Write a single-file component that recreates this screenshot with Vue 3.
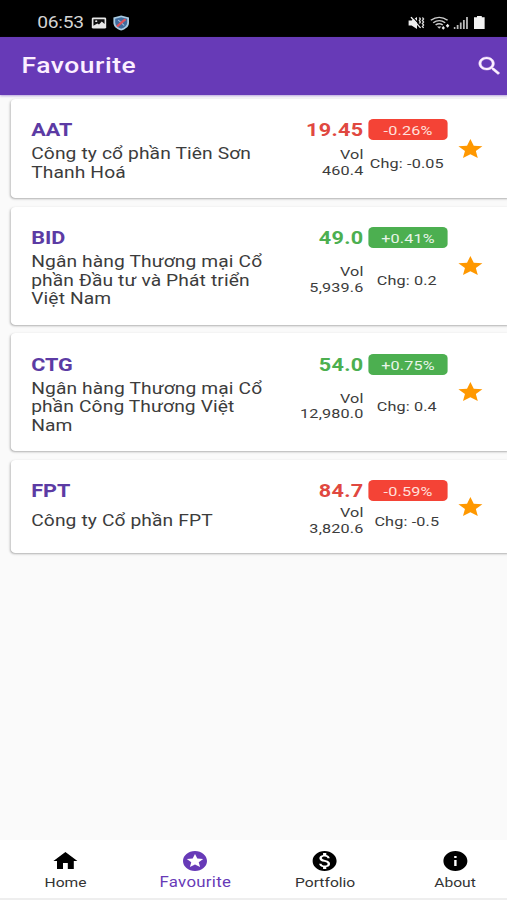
<script setup>
import { ref } from 'vue';

const stocks = ref([
    { code: 'AAT', name: 'Công ty cổ phần Tiên Sơn Thanh Hoá', price: '19.45', percent: '-0.26%', vol: '460.4', chg: '-0.05' },
    { code: 'BID', name: 'Ngân hàng Thương mại Cổ phần Đầu tư và Phát triển Việt Nam', price: '49.0', percent: '+0.41%', vol: '5,939.6', chg: '0.2' },
    { code: 'CTG', name: 'Ngân hàng Thương mại Cổ phần Công Thương Việt Nam', price: '54.0', percent: '+0.75%', vol: '12,980.0', chg: '0.4' },
    { code: 'FPT', name: 'Công ty Cổ phần FPT', price: '84.7', percent: '-0.59%', vol: '3,820.6', chg: '-0.5' },
]);

const tabs = [
    { label: 'Home', icon: 'M10 20v-6h4v6h5v-8h3L12 3 2 12h3v8z' },
    { label: 'Favourite', icon: 'M11.99 2C6.47 2 2 6.48 2 12s4.47 10 9.99 10C17.52 22 22 17.52 22 12S17.52 2 11.99 2zm4.24 16L12 15.45 7.77 18l1.12-4.81-3.73-3.23 4.92-.42L12 5l1.92 4.53 4.92.42-3.73 3.23L16.23 18z' },
    { label: 'Portfolio', icon: 'M12 2C6.48 2 2 6.48 2 12s4.48 10 10 10 10-4.48 10-10S17.52 2 12 2zm1.41 16.09V20h-2.67v-1.93c-1.71-.36-3.16-1.46-3.27-3.4h1.96c.1 1.05.82 1.87 2.65 1.87 1.96 0 2.4-.98 2.4-1.59 0-.83-.44-1.61-2.67-2.14-2.48-.6-4.18-1.62-4.18-3.67 0-1.72 1.39-2.84 3.11-3.21V4h2.67v1.95c1.86.45 2.79 1.86 2.85 3.39H14.3c-.05-1.11-.64-1.87-2.22-1.87-1.5 0-2.4.68-2.4 1.64 0 .84.65 1.39 2.67 1.91s4.18 1.39 4.18 3.91c-.01 1.83-1.38 2.83-3.12 3.16z' },
    { label: 'About', icon: 'M12 2C6.48 2 2 6.48 2 12s4.48 10 10 10 10-4.48 10-10S17.52 2 12 2zm1 15h-2v-6h2v6zm0-8h-2V7h2v2z' },
];

const current = ref('Favourite');
</script>

<template>
    <div class="screen">
        <div class="status">
            <span class="time">06:53</span>
            <svg class="picture" viewBox="0 0 14 14">
                <rect x="0.5" y="1" width="13" height="12" rx="1.5" fill="#e8e8e8" />
                <path d="M2 3h10v5l-2.5-2.5L7 8.5 5.5 7.5 2 10z" fill="#111" />
                <circle cx="4.5" cy="5" r="1" fill="#e8e8e8" />
            </svg>
            <svg class="shield" viewBox="0 0 14 16">
                <path d="M7 .5 13.5 2.5V7.5C13.5 11.5 11 14 7 15.5 3 14 .5 11.5.5 7.5V2.5z" fill="#a9cbe2" />
                <path d="M7 2.2 12 3.7V7.5C12 10.5 10 12.5 7 13.800 4 12.5 2 10.5 2 7.5V3.700z" fill="#3f6c9e" />
                <path d="M4.500 5l5 5.500" stroke="#a9bfe0" stroke-width="1" />
                <path d="M3.500 11.500 10.500 4.300" stroke="#e0525a" stroke-width="2" />
            </svg>
            <div class="signals">
                <svg class="mute" viewBox="0 0 14 14">
                    <path d="M.5 4.500H3L7.500 1v12L3 9.500H.5z" fill="#eee" />
                    <path d="M3.500.5l8 10.500" stroke="#000" stroke-width="1.200" />
                    <path d="M2.500 1.200l8 10.800" stroke="#eee" stroke-width="1.200" />
                    <path d="M9.500 1.500l.8 1.500-.8 1.500.8 1.500-.8 1.500M12 1.500l1 1.500-1 1.500 1 1.500-1 1.500 1 1.500-1 1.500 1 1.500" fill="none" stroke="#ddd" stroke-width="1.200" />
                </svg>
                <svg class="wifi" viewBox="0 0 17 14">
                    <g fill="none" stroke="#ccc" stroke-width="1.300">
                        <path d="M1 4.200Q8 -1.500 15 4.200" />
                        <path d="M3 6.700Q8 2.500 13 6.700" />
                        <path d="M5 9Q8 6.500 11 9" />
                    </g>
                    <path d="M6.200 10.500h3.600L8 12.800z" fill="#ccc" />
                    <path d="M10 12l1.400-2 1.400 2-1.400 1.700zM13.500 9.800l1.500-2 1.500 2-1.500 1.900z" fill="#eee" />
                </svg>
                <svg class="bars" viewBox="0 0 12 12">
                    <path d="M0 10h1.500v2H0zM2.600 8h1.500v4H2.600zM5.200 5.500h1.500V12H5.200zM7.800 3h1.500v9H7.800zM10.400 0h1.500v12h-1.500z" fill="#bbb" />
                </svg>
                <svg class="battery" viewBox="0 0 9 13">
                    <path d="M2.500 0h4v1.300H9V13H0V1.300h2.500z" fill="#f2f2f2" />
                </svg>
            </div>
        </div>

        <header class="appbar">
            <h1>Favourite</h1>
            <svg class="search" viewBox="0 0 24 24">
                <path fill="currentColor" stroke="currentColor" stroke-width="0.4" d="M15.5 14h-.79l-.28-.27C15.41 12.59 16 11.11 16 9.5 16 5.91 13.09 3 9.5 3S3 5.910 3 9.5 5.910 16 9.5 16c1.610 0 3.090-.59 4.230-1.570l.27.28v.79l5 4.990L20.490 19l-4.990-5zm-6 0C7.010 14 5 11.990 5 9.500S7.010 5 9.500 5 14 7.010 14 9.500 11.990 14 9.500 14z" />
            </svg>
        </header>

        <main class="list">
            <div class="card" v-for="stock in stocks" :key="stock.code">
                <div class="info">
                    <div class="code">{{ stock.code }}</div>
                    <div class="price" :class="{ down: stock.percent[0] === '-' }">{{ stock.price }}</div>
                    <div class="badge" :class="{ down: stock.percent[0] === '-' }">{{ stock.percent }}</div>
                    <div class="name">{{ stock.name }}</div>
                    <div class="vol">
                        <div>Vol</div>
                        <div>{{ stock.vol }}</div>
                    </div>
                    <div class="chg">Chg: {{ stock.chg }}</div>
                </div>
                <svg class="star" viewBox="0 0 24 24">
                    <path fill="currentColor" d="M12 17.270 18.180 21l-1.640-7.030L22 9.240l-7.190-.61L12 2 9.190 8.630 2 9.240l5.460 4.730L5.820 21z" />
                </svg>
            </div>
        </main>

        <nav class="tabs">
            <div
                class="tab"
                v-for="tab in tabs"
                :key="tab.label"
                :class="{ active: tab.label === current }"
                @click="current = tab.label"
            >
                <svg viewBox="0 0 24 24"><path fill="currentColor" :d="tab.icon" /></svg>
                <span>{{ tab.label }}</span>
            </div>
        </nav>
    </div>
</template>

<style>
body {
    margin: 0;
    overflow: hidden;
    background: #fafafa;
}
</style>

<style scoped>
/* the layout is 422.5 units wide and stretched horizontally to fill 507px */
.screen {
    width: 422.5px;
    height: 900px;
    display: flex;
    flex-direction: column;
    overflow: hidden;
    box-sizing: border-box;
    border-bottom: 2px solid #eeeeee;
    background: #fafafa;
    color: #3c3c3c;
    font-family: Roboto, "Noto Sans", sans-serif;
    transform: scaleX(1.2);
    transform-origin: 0 0;
}
svg {
    display: block;
    flex: none;
}
.status {
    height: 37px;
    flex: none;
    display: flex;
    align-items: center;
    box-sizing: border-box;
    padding: 8px 19px 0 31px;
    background: #000;
}
.time {
    width: 45px;
    padding-top: 1px;
    font-size: 16px;
    line-height: 20px;
    letter-spacing: -0.2px;
    color: #d4d4d4;
}
.picture {
    width: 13px;
    height: 14px;
}
.shield {
    width: 14px;
    height: 16px;
    margin-left: 5px;
}
.signals {
    margin-left: auto;
    display: flex;
    align-items: center;
}
.mute {
    width: 14px;
    height: 14px;
}
.wifi {
    width: 17px;
    height: 14px;
    margin-left: 4px;
}
.bars {
    width: 12px;
    height: 12px;
    margin-left: 3px;
}
.battery {
    width: 9px;
    height: 13px;
    margin-left: 5px;
}
.appbar {
    position: relative;
    height: 58px;
    flex: none;
    display: flex;
    align-items: center;
    justify-content: space-between;
    box-sizing: border-box;
    padding: 0 3px 0 18px;
    background: #673ab7;
    color: #fcefff;
    box-shadow: 0 1px 2px rgba(103, 58, 183, 0.45);
}
h1 {
    margin: 0;
    font-size: 22px;
    font-weight: 500;
    line-height: 26px;
    letter-spacing: 0.45px;
}
.search {
    width: 24px;
    height: 24px;
}
.list {
    flex: 1;
    display: flex;
    flex-direction: column;
    gap: 8.5px;
    padding: 3.5px 0 0 9px;
}
.card {
    display: flex;
    align-items: center;
    padding: 20.5px 0 17px 17px;
    background: #fff;
    border-radius: 4px 0 0 4px;
    box-shadow: 0 1px 2px rgba(0, 0, 0, 0.3);
}
.info {
    display: grid;
    grid-template-columns: 205px 72px 66px;
    row-gap: 4px;
    align-items: center;
}
.code {
    font-size: 18px;
    font-weight: 700;
    line-height: 21px;
    color: #5c3ba4;
}
.price {
    font-size: 18px;
    font-weight: 700;
    line-height: 21px;
    letter-spacing: 0.3px;
    text-align: right;
    color: #4caf50;
}
.price.down {
    color: #e04840;
}
.badge {
    height: 21px;
    margin-left: 4px;
    width: 66px;
    border-radius: 4px;
    background: #4caf50;
    color: #e9f5e9;
    font-size: 13.5px;
    line-height: 22px;
    letter-spacing: 0.15px;
    text-align: center;
}
.badge.down {
    background: #f44336;
    color: #ffe0dc;
}
.name {
    padding-top: 1px;
    margin-bottom: -1px;
    font-size: 16px;
    line-height: 18.5px;
    letter-spacing: 0.1px;
}
.vol {
    font-size: 13.5px;
    line-height: 15.5px;
    letter-spacing: 0.15px;
    text-align: right;
}
.chg {
    margin-left: 3px;
    width: 66px;
    font-size: 13.5px;
    line-height: 16px;
    letter-spacing: 0.12px;
    text-align: center;
}
.star {
    width: 24px;
    height: 24px;
    margin: -3px 0 0 11px;
    color: #ff9800;
}
.tabs {
    height: 58px;
    flex: none;
    display: flex;
    padding-left: 0.5px;
    box-sizing: border-box;
    background: #fff;
}
.tab {
    width: 108.2px;
    flex: none;
    display: flex;
    flex-direction: column;
    align-items: center;
    padding-top: 9px;
    font-size: 13px;
    line-height: 16px;
    color: #000;
}
.tab span {
    margin-top: 2px;
    color: #333;
}
.tab svg {
    width: 25px;
    height: 24px;
}
.tab.active,
.tab.active span {
    color: #673ab7;
}
.tab.active span {
    margin-top: 1px;
    font-size: 14px;
    letter-spacing: 0.25px;
}
</style>
